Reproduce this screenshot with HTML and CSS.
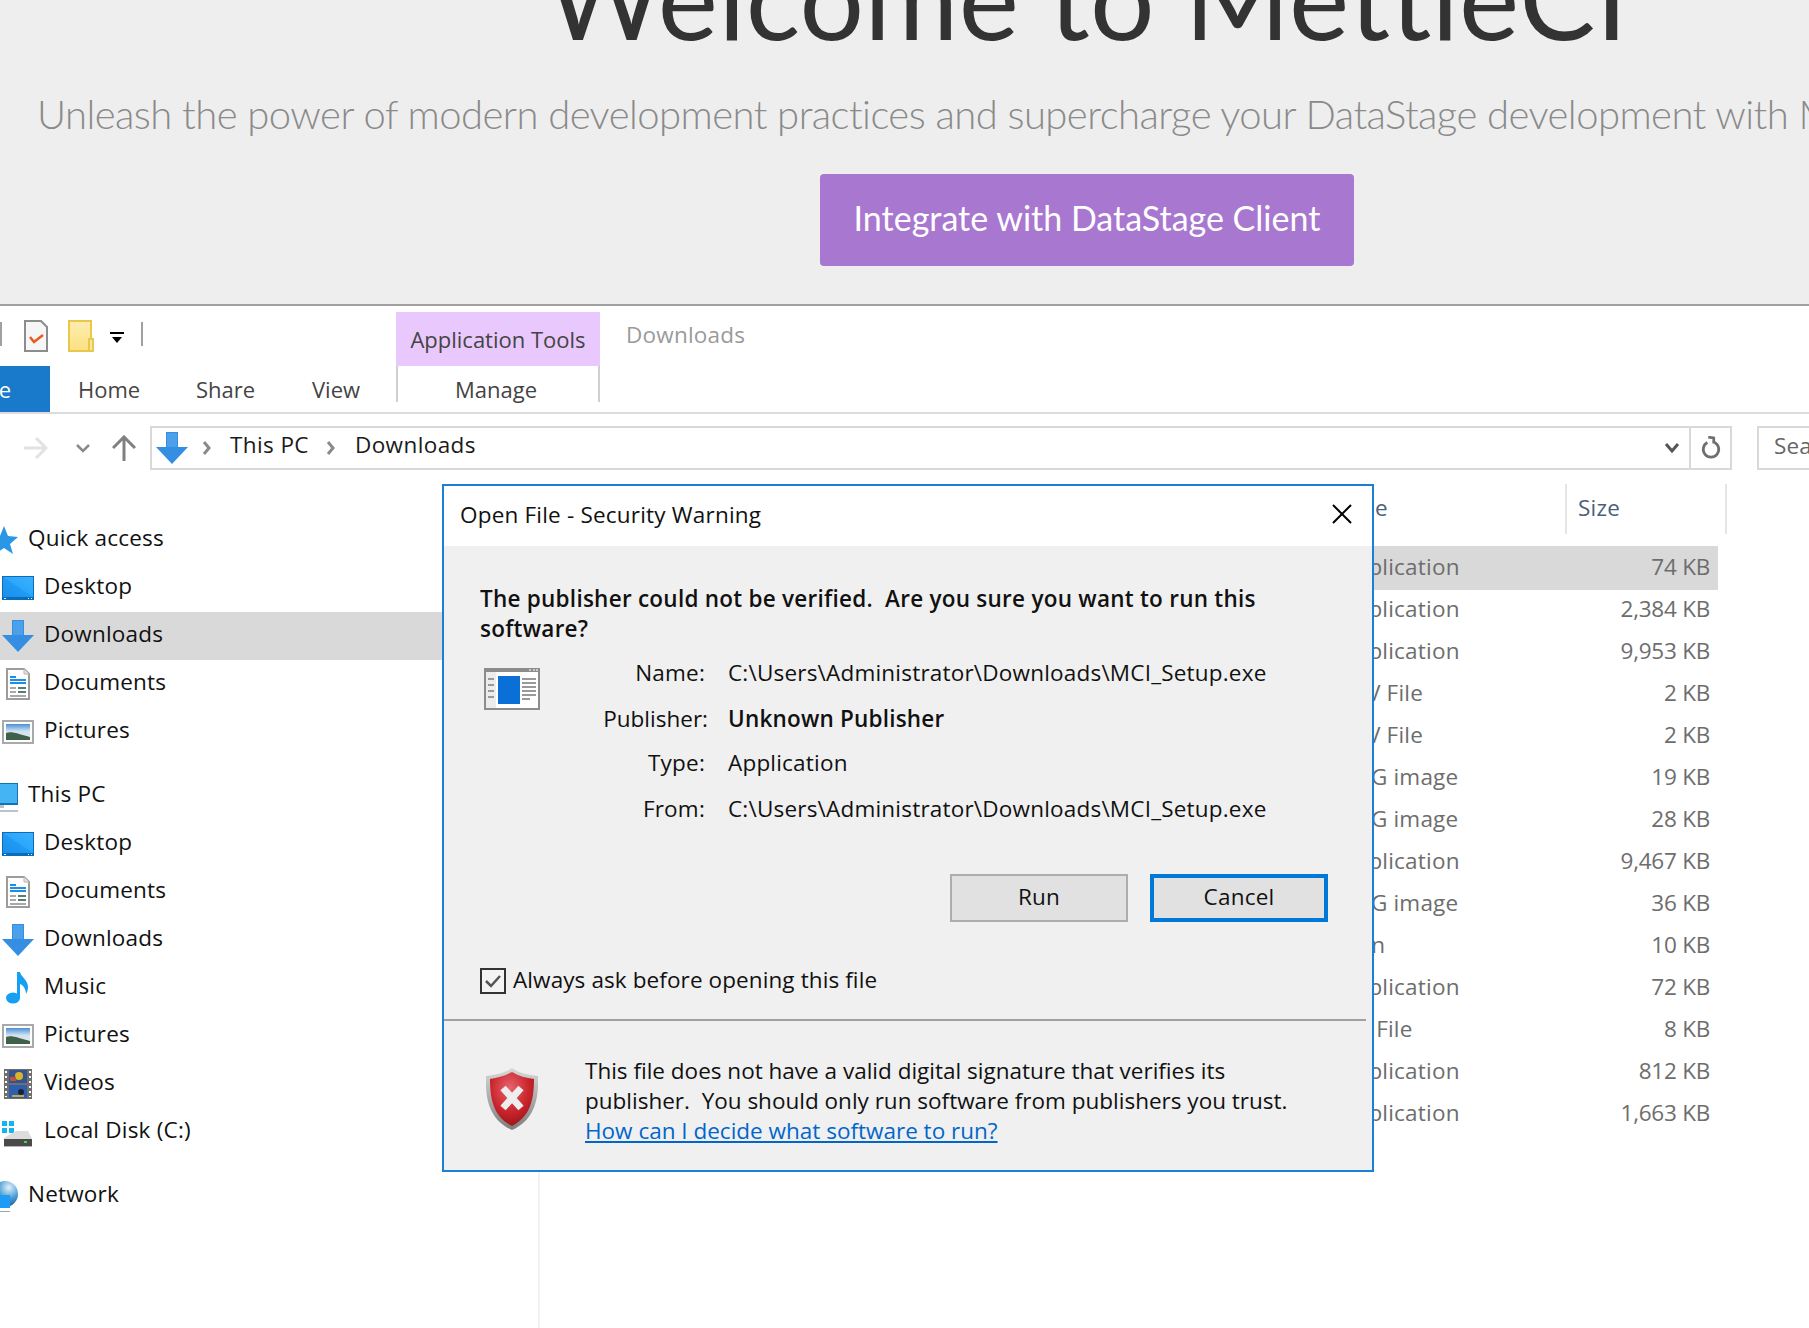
FILE: index.html
```html
<!DOCTYPE html>
<html lang="en">
<head>
    <meta charset="UTF-8">
    <title>Open File - Security Warning</title>
    <link rel="stylesheet" href="styles.css">
</head>
<body>
    <svg class="sprite" width="0" height="0">
        <defs>
            <linearGradient id="screen" x1="0" y1="1" x2="1" y2="0">
                <stop offset="0" stop-color="#1b8fe8"/>
                <stop offset="0.5" stop-color="#1f9bf6"/>
                <stop offset="0.5" stop-color="#2ba6fb"/>
                <stop offset="1" stop-color="#3cb2ff"/>
            </linearGradient>
            <linearGradient id="sky" x1="0" y1="0" x2="0" y2="1">
                <stop offset="0" stop-color="#4a90d9"/>
                <stop offset="0.45" stop-color="#cfe2ee"/>
                <stop offset="1" stop-color="#e8eeee"/>
            </linearGradient>
            <linearGradient id="folderfill" x1="0" y1="0" x2="0" y2="1">
                <stop offset="0" stop-color="#fdeeb0"/>
                <stop offset="1" stop-color="#fbdf82"/>
            </linearGradient>
            <radialGradient id="shieldfill" cx="0.45" cy="0.3" r="0.8">
                <stop offset="0" stop-color="#e8646c"/>
                <stop offset="0.55" stop-color="#c9242c"/>
                <stop offset="1" stop-color="#8f1116"/>
            </radialGradient>
            <linearGradient id="shieldrim" x1="0" y1="0" x2="0" y2="1">
                <stop offset="0" stop-color="#d8d8d8"/>
                <stop offset="1" stop-color="#7e7e7e"/>
            </linearGradient>
            <radialGradient id="globe" cx="0.65" cy="0.25" r="0.75">
                <stop offset="0" stop-color="#e3f1f8"/>
                <stop offset="0.55" stop-color="#4b9fd6"/>
                <stop offset="1" stop-color="#1f5f96"/>
            </radialGradient>
            <symbol id="i-desktop" viewBox="0 0 32 32">
                <rect y="4" width="32" height="24" fill="#0a6db8"/>
                <rect x="1" y="5" width="30" height="20" fill="url(#screen)"/>
                <rect x="2" y="26" width="2" height="1" fill="#fff"/>
                <rect x="26" y="26" width="1" height="1" fill="#fff"/>
                <rect x="29" y="26" width="1" height="1" fill="#fff"/>
            </symbol>
            <symbol id="i-down" viewBox="0 0 32 32">
                <path d="M10 0h12v15h10L16 32 0 15h10z" fill="#348fe2"/>
                <path d="M11 1h10v14H11z" fill="#4c9fea"/>
            </symbol>
            <symbol id="i-docs" viewBox="0 0 32 32">
                <path d="M5 1h17l5 5v25H5z" fill="#fff" stroke="#9c9c9c" stroke-width="2"/>
                <path d="M22 1v5h5" fill="#e4e4e4" stroke="#b5b5b5"/>
                <path d="M8 9h6M8 12h16M8 15h16" stroke="#1f8de6" stroke-width="2"/>
                <path d="M8 20h6M8 24h6M8 28h16" stroke="#a9a9a9" stroke-width="2"/>
                <path d="M16 20h8M16 24h8" stroke="#5b7d6b" stroke-width="2"/>
            </symbol>
            <symbol id="i-pics" viewBox="0 0 32 32">
                <rect x="1" y="5" width="30" height="22" fill="#fff" stroke="#a9a9a9" stroke-width="2"/>
                <rect x="4" y="8" width="24" height="16" fill="url(#sky)"/>
                <path d="M4 17c6-2 12 1 24 4v3H4z" fill="#41604a"/>
            </symbol>
            <symbol id="i-pc" viewBox="0 0 32 32">
                <rect y="3" width="32" height="22" fill="#1273b5"/>
                <rect x="0" y="4" width="31" height="19" fill="#45b4f5"/>
                <rect x="8" y="25" width="10" height="3" fill="#b8c4cc"/>
                <rect x="0" y="30" width="32" height="2" fill="#b8c4cc"/>
            </symbol>
            <symbol id="i-star" viewBox="0 0 32 32">
                <path d="M18 2l4 10 10 1-8 7 3 10-9-6-9 6 3-10-8-7 10-1z" fill="#2a96e6"/>
                <path d="M6 11h8M6 15h6" stroke="#bfe0f7" stroke-width="1"/>
            </symbol>
            <symbol id="i-net" viewBox="0 0 32 32">
                <circle cx="19" cy="14" r="13" fill="url(#globe)"/>
                <rect x="4" y="15" width="20" height="13" fill="#1f9bf6"/>
                <rect x="14" y="31" width="10" height="1" fill="#9aa5ad"/>
            </symbol>
            <symbol id="i-music" viewBox="0 0 32 32">
                <ellipse cx="11" cy="26" rx="7" ry="5.5" fill="#179ff2"/>
                <path d="M15 0h3c1 5 8 8 8 15 0 3-1 5-2 7 0-5-3-9-6-10v14h-3z" fill="#179ff2"/>
            </symbol>
            <symbol id="i-film" viewBox="0 0 32 32">
                <rect x="2" y="1" width="28" height="30" fill="#6f6f6f"/>
                <rect x="7" y="2" width="18" height="13" fill="#34558c"/>
                <rect x="7" y="17" width="18" height="13" fill="#2c5fae"/>
                <circle cx="17" cy="8" r="4" fill="#d9b52a"/>
                <rect x="8" y="9" width="6" height="4" fill="#c2503f"/>
                <circle cx="19" cy="24" r="3" fill="#1c2433"/>
                <rect x="10" y="27" width="12" height="2" fill="#c7a93a"/>
                <path d="M4 3v26M28 3v26" stroke="#fff" stroke-width="2" stroke-dasharray="2 3"/>
            </symbol>
            <symbol id="i-disk" viewBox="0 0 32 32">
                <path d="M0 5h5v5H0zM7 5h5v5H7zM0 12h5v5H0zM7 12h5v5H7z" fill="#14b4f0"/>
                <path d="M14 15h12l4 8H2v-1z" fill="#dcdcdc"/>
                <rect x="2" y="23" width="28" height="7" fill="#4a4a4a"/>
                <rect x="2" y="30" width="28" height="1" fill="#b5b5b5"/>
                <rect x="22" y="25" width="3" height="2" fill="#3ddc3d"/>
            </symbol>
            <symbol id="i-chev" viewBox="0 0 10 14">
                <path d="M2 1l5 6-5 6" fill="none" stroke="#8a8a8a" stroke-width="3"/>
            </symbol>
        </defs>
    </svg>

    <header class="hero">
        <div class="hero-inner">
            <h1>Welcome to MettleCI</h1>
            <p class="lead">Unleash the power of modern development practices and supercharge your DataStage development with MettleCI</p>
            <a class="cta" href="#">Integrate with DataStage Client</a>
        </div>
    </header>

    <section class="explorer">
        <div class="titlerow">
            <div class="qat">
                <span class="qat-tick"></span>
                <svg class="qat-doc" width="24" height="32" viewBox="0 0 24 32">
                    <path d="M1 1h16l6 6v24H1z" fill="#f6f6f6" stroke="#8c8c8c" stroke-width="2"/>
                    <path d="M6 17l4 5 9-7" fill="none" stroke="#ea5a1c" stroke-width="2.5"/>
                </svg>
                <svg class="qat-folder" width="26" height="32" viewBox="0 0 26 32">
                    <path d="M1 1h22v30H1z" fill="url(#folderfill)" stroke="#e9c64c" stroke-width="2"/>
                    <path d="M21 19h4v12h-4z" fill="#fbe79c" stroke="#e9c64c" stroke-width="2"/>
                </svg>
                <svg class="qat-drop" width="14" height="12" viewBox="0 0 14 12">
                    <path d="M0 0h14v2H0zM2 5h10l-5 6z" fill="#000"/>
                </svg>
                <span class="qat-sep"></span>
            </div>
            <div class="ctx-tab">Application Tools</div>
            <div class="win-title">Downloads</div>
        </div>

        <nav class="tabs">
            <a class="tab-file">File</a>
            <a class="tab tab-home">Home</a>
            <a class="tab tab-share">Share</a>
            <a class="tab tab-view">View</a>
            <a class="tab tab-manage">Manage</a>
        </nav>

        <div class="addr">
            <div class="nav-btns">
                <svg class="nav-fwd" width="24" height="22" viewBox="0 0 24 22">
                    <path d="M0 11h21M12 1l10 10-10 10" fill="none" stroke="#e2e2e2" stroke-width="3"/>
                </svg>
                <svg class="nav-recent" width="14" height="10" viewBox="0 0 14 10">
                    <path d="M1 2l6 6 6-6" fill="none" stroke="#8a8a8a" stroke-width="2.5"/>
                </svg>
                <svg class="nav-up" width="24" height="26" viewBox="0 0 24 26">
                    <path d="M12 26V3M1 13L12 2l11 11" fill="none" stroke="#808080" stroke-width="3"/>
                </svg>
            </div>
            <div class="bar">
                <svg class="bar-icon" width="32" height="32"><use href="#i-down"/></svg>
                <svg class="crumb-chev" width="10" height="14"><use href="#i-chev"/></svg>
                <span class="crumb">This PC</span>
                <svg class="crumb-chev" width="10" height="14"><use href="#i-chev"/></svg>
                <span class="crumb">Downloads</span>
                <svg class="bar-drop" width="16" height="12" viewBox="0 0 16 12">
                    <path d="M2 2l6 7 6-7" fill="none" stroke="#555" stroke-width="3"/>
                </svg>
                <div class="bar-refresh">
                    <svg width="20" height="24" viewBox="0 0 22 26">
                        <path d="M7 7a8.5 8.5 0 1 0 8 0" fill="none" stroke="#6f6f6f" stroke-width="3"/>
                        <path d="M8 1l6 1v6" fill="none" stroke="#6f6f6f" stroke-width="3"/>
                    </svg>
                </div>
            </div>
            <div class="search">Search Downloads</div>
        </div>

        <div class="panes">
            <aside class="sidebar">
                <ul class="tree">
                    <li class="node parent"><svg width="32" height="32"><use href="#i-star"/></svg>Quick access</li>
                    <li class="node"><svg width="32" height="32"><use href="#i-desktop"/></svg>Desktop</li>
                    <li class="node active"><svg width="32" height="32"><use href="#i-down"/></svg>Downloads</li>
                    <li class="node"><svg width="32" height="32"><use href="#i-docs"/></svg>Documents</li>
                    <li class="node"><svg width="32" height="32"><use href="#i-pics"/></svg>Pictures</li>
                </ul>
                <ul class="tree">
                    <li class="node parent"><svg width="32" height="32"><use href="#i-pc"/></svg>This PC</li>
                    <li class="node"><svg width="32" height="32"><use href="#i-desktop"/></svg>Desktop</li>
                    <li class="node"><svg width="32" height="32"><use href="#i-docs"/></svg>Documents</li>
                    <li class="node"><svg width="32" height="32"><use href="#i-down"/></svg>Downloads</li>
                    <li class="node"><svg width="32" height="32"><use href="#i-music"/></svg>Music</li>
                    <li class="node"><svg width="32" height="32"><use href="#i-pics"/></svg>Pictures</li>
                    <li class="node"><svg width="32" height="32"><use href="#i-film"/></svg>Videos</li>
                    <li class="node"><svg width="32" height="32"><use href="#i-disk"/></svg>Local Disk (C:)</li>
                </ul>
                <ul class="tree">
                    <li class="node parent"><svg width="32" height="32"><use href="#i-net"/></svg>Network</li>
                </ul>
            </aside>

            <main class="files">
                <div class="file-head">
                    <span class="col-type">Type</span>
                    <span class="col-size">Size</span>
                </div>
                <div class="file-row selected"><span>Application</span><span class="size">74 KB</span></div>
                <div class="file-row"><span>Application</span><span class="size">2,384 KB</span></div>
                <div class="file-row"><span>Application</span><span class="size">9,953 KB</span></div>
                <div class="file-row"><span>CSV File</span><span class="size">2 KB</span></div>
                <div class="file-row"><span>CSV File</span><span class="size">2 KB</span></div>
                <div class="file-row"><span>PNG image</span><span class="size">19 KB</span></div>
                <div class="file-row"><span>PNG image</span><span class="size">28 KB</span></div>
                <div class="file-row"><span>Application</span><span class="size">9,467 KB</span></div>
                <div class="file-row"><span>PNG image</span><span class="size">36 KB</span></div>
                <div class="file-row"><span>Icon</span><span class="size">10 KB</span></div>
                <div class="file-row"><span>Application</span><span class="size">72 KB</span></div>
                <div class="file-row"><span>INI File</span><span class="size">8 KB</span></div>
                <div class="file-row"><span>Application</span><span class="size">812 KB</span></div>
                <div class="file-row"><span>Application</span><span class="size">1,663 KB</span></div>
            </main>
        </div>
    </section>

    <div class="dialog">
        <div class="dialog-title">
            <span>Open File - Security Warning</span>
            <svg width="20" height="20" viewBox="0 0 20 20">
                <path d="M1 1l18 18M19 1L1 19" stroke="#000" stroke-width="2"/>
            </svg>
        </div>
        <div class="dialog-main">
            <p class="question">The publisher could not be verified.&nbsp; Are you sure you want to run this<br>software?</p>
            <div class="details">
                <svg class="app-icon" width="56" height="42" viewBox="0 0 56 42">
                    <rect width="56" height="42" fill="#8c8c8c"/>
                    <rect x="2" y="4" width="52" height="36" fill="#fff"/>
                    <rect x="2" y="4" width="10" height="36" fill="#ececec"/>
                    <rect x="14" y="8" width="22" height="28" fill="#0a6fd6"/>
                    <path d="M4 11h6M4 17h6M4 23h6M4 29h6M38 11h14M38 15h14M38 19h14M38 23h14M38 27h14M38 31h8" stroke="#999" stroke-width="2"/>
                    <path d="M45 2h2M49 2h2M52 2h2" stroke="#c9c9c9" stroke-width="2"/>
                </svg>
                <dl class="fields">
                    <div class="field"><dt>Name:</dt><dd>C:\Users\Administrator\Downloads\MCI_Setup.exe</dd></div>
                    <div class="field f-publisher"><dt>Publisher:</dt><dd class="strong">Unknown Publisher</dd></div>
                    <div class="field f-type"><dt>Type:</dt><dd>Application</dd></div>
                    <div class="field f-from"><dt>From:</dt><dd>C:\Users\Administrator\Downloads\MCI_Setup.exe</dd></div>
                </dl>
            </div>
            <div class="actions">
                <button class="btn">Run</button>
                <button class="btn btn-default">Cancel</button>
            </div>
            <label class="always">
                <span class="checkbox">
                    <svg width="22" height="22" viewBox="0 0 22 22">
                        <path d="M4 11l5 5 9-10" fill="none" stroke="#555" stroke-width="2.5"/>
                    </svg>
                </span>
                Always ask before opening this file
            </label>
        </div>
        <div class="dialog-rule"></div>
        <div class="dialog-foot">
            <svg class="shield" width="52" height="62" viewBox="0 0 52 62">
                <path d="M26 0c7 5 16 7 26 8 1 24-4 44-26 54C4 52-1 32 0 8c10-1 19-3 26-8z" fill="url(#shieldrim)"/>
                <path d="M26 4c7 4 14 6 22 7 0 21-4 38-22 47C8 49 4 32 4 11c8-1 15-3 22-7z" fill="url(#shieldfill)"/>
                <path d="M17 20l18 20M35 20L17 40" stroke="#eee" stroke-width="7"/>
            </svg>
            <p class="notice">This file does not have a valid digital signature that verifies its<br>publisher.&nbsp; You should only run software from publishers you trust.<br><a href="#">How can I decide what software to run?</a></p>
        </div>
    </div>
</body>
</html>
```

FILE: styles.css
```css
*{
    margin: 0;
    padding: 0;
    box-sizing: border-box;
}
html,body{
    width: 1809px;
    height: 1328px;
    overflow: hidden;
}
body{
    position: relative;
    background: #fff;
    color: #111;
    font-family: "Open Sans", "Liberation Sans", sans-serif;
    font-size: 22.5px;
    letter-spacing: .2px;
}
ul{
    list-style: none;
}
svg{
    display: block;
    flex: none;
}
.sprite{
    position: absolute;
}

/* web page behind the explorer window */
.hero{
    height: 304px;
    background: #eee;
    overflow: hidden;
}
.hero-inner{
    width: 1809px;
    padding-left: 365px;
    display: flex;
    flex-direction: column;
    align-items: center;
    font-family: Lato, "Open Sans", sans-serif;
    letter-spacing: 0;
}
.hero h1{
    margin-top: -58px;
    font-size: 114px;
    line-height: 108px;
    font-weight: 400;
    letter-spacing: .4px;
    color: #333;
    white-space: nowrap;
}
.lead{
    align-self: flex-start;
    width: 1772px;
    margin: 39px 0 0 -328px;
    overflow: hidden;
    font-size: 40px;
    line-height: 50px;
    font-weight: 300;
    letter-spacing: -.55px;
    color: #8a8a8a;
    white-space: nowrap;
}
.cta{
    margin-top: 35px;
    width: 534px;
    height: 92px;
    padding-bottom: 5px;
    display: flex;
    align-items: center;
    justify-content: center;
    background: #a877d0;
    border-radius: 4px;
    color: #fff;
    font-size: 34px;
    text-decoration: none;
    white-space: nowrap;
}

/* explorer ribbon */
.explorer{
    border-top: 2px solid #a0a0a0;
}
.titlerow{
    height: 60px;
    display: flex;
    align-items: flex-start;
}
.qat{
    width: 396px;
    margin-top: 14px;
    display: flex;
    align-items: flex-start;
}
.qat-tick{
    width: 2px;
    height: 24px;
    margin-top: 2px;
    background: #a0a0a0;
}
.qat-doc{
    margin-left: 22px;
}
.qat-folder{
    margin-left: 20px;
}
.qat-drop{
    margin: 12px 0 0 16px;
}
.qat-sep{
    width: 2px;
    height: 24px;
    margin: 2px 0 0 17px;
    background: #a0a0a0;
}
.ctx-tab{
    width: 204px;
    height: 54px;
    margin-top: 6px;
    padding-top: 12px;
    background: #e9c9fd;
    color: #444;
    text-align: center;
    font-size: 22px;
    letter-spacing: 0;
    line-height: 30px;
    white-space: nowrap;
}
.win-title{
    margin: 14px 0 0 26px;
    line-height: 30px;
    color: #9a9a9a;
}
.tabs{
    height: 48px;
    display: flex;
    align-items: flex-start;
    border-bottom: 2px solid #dcdcdc;
    color: #444;
    font-size: 22px;
    letter-spacing: 0;
    line-height: 46px;
}
.tab-file{
    width: 50px;
    height: 46px;
    padding-right: 39px;
    display: flex;
    justify-content: flex-end;
    overflow: hidden;
    background: #1979ca;
    color: #fff;
}
.tab-home{
    width: 118px;
    margin-left: 28px;
}
.tab-share{
    width: 116px;
}
.tab-view{
    width: 84px;
}
.tab-manage{
    width: 204px;
    height: 36px;
    padding-right: 4px;
    line-height: 46px;
    text-align: center;
    border-left: 2px solid #d0d0d0;
    border-right: 2px solid #d0d0d0;
}

/* address bar */
.addr{
    height: 70px;
    padding-top: 12px;
    display: flex;
    align-items: flex-start;
}
.nav-btns{
    width: 150px;
    height: 44px;
    flex: none;
    display: flex;
    align-items: center;
}
.nav-fwd{
    margin-left: 24px;
}
.nav-recent{
    margin-left: 28px;
}
.nav-up{
    margin-left: 22px;
}
.bar{
    width: 1582px;
    height: 44px;
    flex: none;
    display: flex;
    align-items: center;
    border: 2px solid #d9d9d9;
}
.bar-icon{
    margin-left: 4px;
}
.crumb-chev{
    margin: 0 18px 0 14px;
}
.crumb{
    line-height: 32px;
    margin-top: -6px;
    letter-spacing: .4px;
    color: #1a1a1a;
}
.crumb + .crumb-chev{
    margin: 0 19px 0 17px;
}
.bar-drop{
    margin-left: auto;
    margin-right: 9px;
}
.bar-refresh{
    width: 41px;
    height: 40px;
    display: flex;
    align-items: center;
    justify-content: center;
    border-left: 2px solid #d9d9d9;
}
.search{
    width: 52px;
    height: 44px;
    flex: none;
    margin-left: 25px;
    padding-left: 15px;
    overflow: hidden;
    border: 2px solid #d9d9d9;
    border-right: 0;
    color: #666;
    line-height: 36px;
    white-space: nowrap;
}

/* navigation pane and file list */
.panes{
    display: flex;
    height: 844px;
}
.sidebar{
    width: 540px;
    flex: none;
    padding-top: 32px;
    border-right: 2px solid #f1f1f1;
}
.tree{
    margin-bottom: 16px;
}
.node{
    height: 48px;
    padding-left: 2px;
    display: flex;
    align-items: flex-start;
    gap: 10px;
    line-height: 44px;
    white-space: nowrap;
}
.node svg{
    margin-top: 8px;
}
.node.parent{
    padding-left: 0;
    margin-left: -14px;
}
.node.active{
    background: #d9d9d9;
}
.files{
    width: 1178px;
    flex: none;
    color: #6d6d6d;
}
.file-head{
    height: 50px;
    margin-bottom: 13px;
    padding-left: 797px;
    display: flex;
    color: #4c607a;
    line-height: 48px;
}
.col-type{
    width: 228px;
    flex: none;
}
.col-size{
    width: 162px;
    height: 50px;
    flex: none;
    padding-left: 11px;
    border-left: 2px solid #e5e5e5;
    border-right: 2px solid #e5e5e5;
}
.file-row{
    height: 42px;
    padding: 0 8px 0 800px;
    display: flex;
    justify-content: space-between;
    line-height: 40px;
}
.file-row.selected{
    height: 44px;
    margin: -1px 0;
    background: #d9d9d9;
    line-height: 42px;
}
.size{
    letter-spacing: -.25px;
}

/* security warning dialog, floats over the explorer window */
.dialog{
    position: absolute;
    left: 442px;
    top: 484px;
    width: 932px;
    height: 688px;
    display: flex;
    flex-direction: column;
    background: #f0f0f0;
    border: 2px solid #1a80d6;
    color: #111;
}
.dialog-title{
    height: 60px;
    flex: none;
    padding: 0 20px 4px 16px;
    display: flex;
    align-items: center;
    justify-content: space-between;
    background: #fff;
}
.dialog-main{
    padding: 38px 44px 0 36px;
}
.question{
    font-weight: 600;
    letter-spacing: .25px;
    line-height: 30px;
}
.details{
    margin-top: 14px;
    display: flex;
    align-items: flex-start;
}
.app-icon{
    margin: 10px 0 0 4px;
}
.field{
    height: 30px;
    display: flex;
    line-height: 30px;
}
.f-publisher{
    margin-top: 16px;
}
.f-type{
    margin-top: 14px;
}
.f-from{
    margin-top: 16px;
}
.field dt{
    width: 165px;
    text-align: right;
    white-space: nowrap;
}
.field dd{
    margin-left: 23px;
    white-space: nowrap;
}
.f-publisher dt{
    width: 168px;
    letter-spacing: 0;
}
.f-publisher dd{
    margin-left: 20px;
}
.field dd.strong{
    font-weight: 600;
}
.actions{
    margin-top: 50px;
    display: flex;
    justify-content: flex-end;
    gap: 22px;
}
.btn{
    width: 178px;
    height: 48px;
    padding-bottom: 4px;
    background: #e1e1e1;
    border: 2px solid #adadad;
    color: #111;
    font-family: inherit;
    font-size: 22.5px;
    letter-spacing: .2px;
}
.btn-default{
    border: 4px solid #0078d7;
}
.always{
    margin-top: 46px;
    height: 26px;
    display: flex;
    align-items: flex-start;
    gap: 7px;
    letter-spacing: .1px;
    line-height: 24px;
    white-space: nowrap;
}
.checkbox{
    width: 26px;
    height: 26px;
    display: block;
    border: 2px solid #333;
    background: #f4f4f4;
}
.dialog-rule{
    height: 2px;
    flex: none;
    margin: 25px 6px 0 0;
    background: #a0a0a0;
}
.dialog-foot{
    padding-top: 35px;
    display: flex;
    align-items: flex-start;
}
.shield{
    margin: 12px 0 0 42px;
}
.notice{
    margin-left: 47px;
    letter-spacing: 0;
    line-height: 30px;
    white-space: nowrap;
}
.notice a{
    color: #0066cc;
    text-decoration: underline;
}
```
